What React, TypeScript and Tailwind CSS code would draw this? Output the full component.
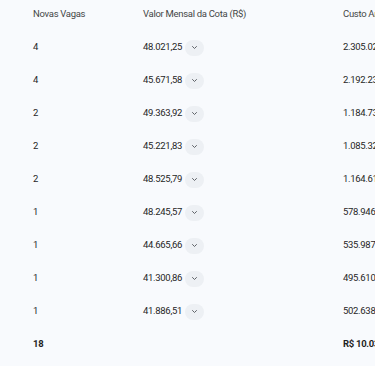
import React from 'react'

const rows = [
  { vagas: '4', valor: '48.021,25', custo: '2.305.020,00' },
  { vagas: '4', valor: '45.671,58', custo: '2.192.235,84' },
  { vagas: '2', valor: '49.363,92', custo: '1.184.734,08' },
  { vagas: '2', valor: '45.221,83', custo: '1.085.323,92' },
  { vagas: '2', valor: '48.525,79', custo: '1.164.618,96' },
  { vagas: '1', valor: '48.245,57', custo: '578.946,84' },
  { vagas: '1', valor: '44.665,66', custo: '535.987,92' },
  { vagas: '1', valor: '41.300,86', custo: '495.610,32' },
  { vagas: '1', valor: '41.886,51', custo: '502.638,12' },
]

function Chevron() {
  return (
    <span className="ml-[3px] inline-flex h-[16px] w-[19px] items-center justify-center rounded-full bg-[#edf0f4]">
      <svg width="7" height="5" viewBox="0 0 7 5" fill="none">
        <path d="M1.5 1.5L3.5 3.5L5.5 1.5" stroke="#5f6368" strokeWidth="1" strokeLinecap="round" strokeLinejoin="round" />
      </svg>
    </span>
  )
}

export default function App() {
  return (
    <div
      className="h-[366px] w-[375px] overflow-hidden bg-[#f8fafd] text-[9.5px] tracking-[-0.3px] text-[#1f1f1f]"
      style={{ fontFamily: 'Roboto, "Liberation Sans", sans-serif' }}
    >
      <div className="w-[600px]">
        {/* header */}
        <div className="flex h-[31px] items-center pb-[3px] pl-[33px] text-[#444746]">
          <div className="w-[110px] shrink-0">Novas Vagas</div>
          <div className="w-[200px] shrink-0">Valor Mensal da Cota (R$)</div>
          <div className="whitespace-nowrap">Custo Anual</div>
        </div>

        {rows.map((r, i) => (
          <div key={i} className="flex h-[33px] items-center pl-[33px]">
            <div className="w-[110px] shrink-0">{r.vagas}</div>
            <div className="flex w-[200px] shrink-0 items-center">
              <span>{r.valor}</span>
              <Chevron />
            </div>
            <div className="whitespace-nowrap">{r.custo}</div>
          </div>
        ))}

        {/* total */}
        <div className="flex h-[33px] items-center pl-[33px] font-bold">
          <div className="w-[110px] shrink-0">18</div>
          <div className="w-[200px] shrink-0" />
          <div className="whitespace-nowrap">R$ 10.039.116,00</div>
        </div>
      </div>
    </div>
  )
}
